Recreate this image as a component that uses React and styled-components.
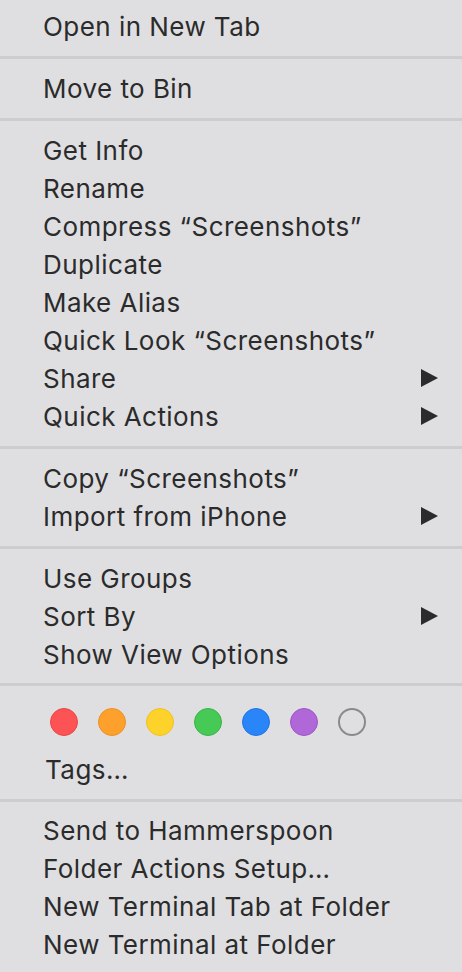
import styled, { createGlobalStyle } from "styled-components";

const Global = createGlobalStyle`
  html, body {
    margin: 0;
    padding: 0;
    background: #dfdfe1;
  }
`;

const Menu = styled.div`
  width: 462px;
  height: 972px;
  box-sizing: border-box;
  padding: 7px 0 9px;
  background: #dfdfe1;
  font-family: Inter, "Liberation Sans", sans-serif;
  color: #2b2b2c;
  display: flex;
  flex-direction: column;
`;

const Item = styled.div`
  height: 38px;
  display: flex;
  align-items: center;
  justify-content: space-between;
  padding: 0 24px 0 ${(p) => (p.$indent ? 45 : 43)}px;
  font-size: 26px;
  letter-spacing: 0.45px;
  white-space: nowrap;
`;

const Separator = styled.div`
  height: 24px;
  display: flex;
  align-items: center;

  &::after {
    content: "";
    flex: 1;
    height: 3px;
    background: #cdcdcf;
  }
`;

const Arrow = styled.span`
  width: 0;
  height: 0;
  border-top: 9.5px solid transparent;
  border-bottom: 9.5px solid transparent;
  border-left: 17px solid #2b2b2c;
`;

const Dots = styled.div`
  height: 54px;
  box-sizing: border-box;
  display: flex;
  align-items: flex-start;
  gap: 20px;
  padding: 11px 0 0 50px;
`;

const Dot = styled.span`
  width: 28px;
  height: 28px;
  box-sizing: border-box;
  border-radius: 50%;
  background: ${(p) => p.$fill};
  border: ${(p) => (p.$empty ? "2px solid #8a8a8c" : `1px solid ${p.$edge}`)};
`;

const sections = [
  [["Open in New Tab"]],
  [["Move to Bin"]],
  [
    ["Get Info"],
    ["Rename"],
    ["Compress “Screenshots”"],
    ["Duplicate"],
    ["Make Alias"],
    ["Quick Look “Screenshots”"],
    ["Share", true],
    ["Quick Actions", true],
  ],
  [["Copy “Screenshots”"], ["Import from iPhone", true]],
  [["Use Groups"], ["Sort By", true], ["Show View Options"]],
];

const tags = [
  { fill: "#fd5354", edge: "#e84545" },
  { fill: "#fda02c", edge: "#ec9020" },
  { fill: "#fcd22b", edge: "#eec21f" },
  { fill: "#46c955", edge: "#36b446" },
  { fill: "#2a86f8", edge: "#1f74e6" },
  { fill: "#b068d8", edge: "#9d55c8" },
  { fill: "transparent", empty: true },
];

const last = [
  "Send to Hammerspoon",
  "Folder Actions Setup…",
  "New Terminal Tab at Folder",
  "New Terminal at Folder",
];

const App = () => {
  return (
    <>
      <Global />
      <Menu>
        {sections.map((sec, i) => (
          <div key={i}>
            {i > 0 && <Separator />}
            {sec.map(([label, sub]) => (
              <Item key={label}>
                <span>{label}</span>
                {sub && <Arrow />}
              </Item>
            ))}
          </div>
        ))}
        <Separator />
        <Dots>
          {tags.map((t, i) => (
            <Dot key={i} $fill={t.fill} $edge={t.edge} $empty={t.empty} />
          ))}
        </Dots>
        <Item $indent>Tags…</Item>
        <Separator />
        {last.map((label) => (
          <Item key={label}>{label}</Item>
        ))}
      </Menu>
    </>
  );
};

export default App;
